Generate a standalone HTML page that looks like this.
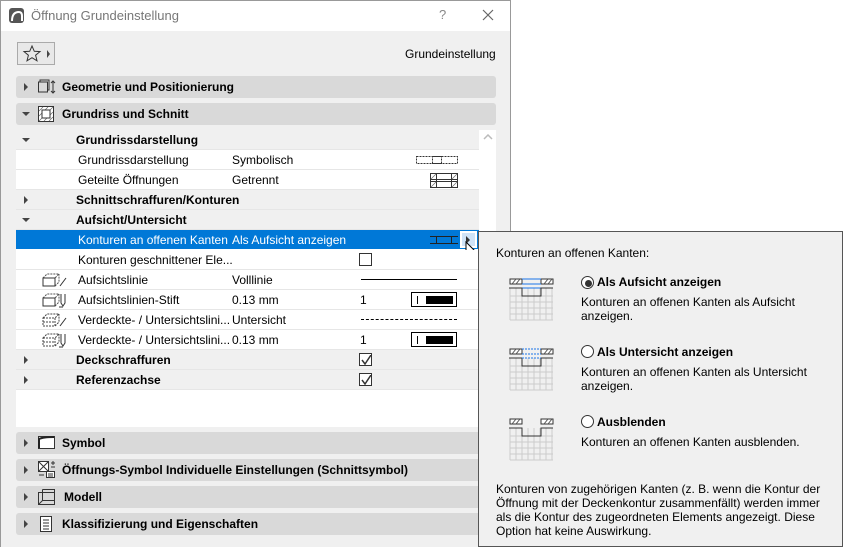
<!DOCTYPE html>
<html><head><meta charset="utf-8"><style>
*{margin:0;padding:0;box-sizing:border-box}
body{width:843px;height:547px;background:#fff;font-family:"Liberation Sans",sans-serif;font-size:12px;color:#000;position:relative;overflow:hidden}
.a{position:absolute}
.win{left:0;top:0;width:511px;height:547px;background:#f0f0f0;border-left:1px solid #999;border-right:1px solid #999;border-top:1px solid #999}
.title{left:1px;top:1px;width:509px;height:30px;background:#fff}
.hdr{left:16px;width:480px;height:22px;background:#d9d9d9;border-radius:3px;font-weight:bold}
.hdr .t{position:absolute;top:4px}
.tri{position:absolute;width:0;height:0;border-top:4px solid transparent;border-bottom:4px solid transparent;border-left:4px solid #444}
.trd{position:absolute;width:0;height:0;border-left:4px solid transparent;border-right:4px solid transparent;border-top:4px solid #444}
.row{left:16px;width:463px;height:20px;background:#fff;border-bottom:1px solid #e6e6e6}
.row.g{background:#f0f0f0;font-weight:bold}
.row span{position:absolute;top:3px}
.c1{left:62px}.c2{left:216px}
.cb{position:absolute;width:13px;height:13px;border:1px solid #333;background:#fff}
.pop{left:478px;top:231px;width:365px;height:316px;background:#f0f0f0;border:1px solid #555}
.pop div{position:absolute}
.radio{width:13px;height:13px;border:1px solid #333;border-radius:50%;background:#fff}
</style></head><body>
<div class="a win"></div>
<div class="a title"></div>
<svg class="a" style="left:9px;top:8px" width="15" height="15"><rect x="0" y="0" width="15" height="15" rx="3" fill="#555"/><path d="M3 13 Q3 4 10 4 Q13 4 13 8 L13 13" stroke="#fff" stroke-width="2" fill="none"/></svg>
<div class="a" style="left:31px;top:8px;font-size:13px;color:#777">Öffnung Grundeinstellung</div>
<div class="a" style="left:439px;top:7px;font-size:13px;color:#888">?</div>
<svg class="a" style="left:482px;top:9px" width="12" height="12"><path d="M1 1L11 11M11 1L1 11" stroke="#666" stroke-width="1.2"/></svg>
<div class="a" style="left:17px;top:42px;width:38px;height:23px;border:1px solid #aaa;background:#e8e8e8"></div>
<svg class="a" style="left:22px;top:44px" width="20" height="19"><path d="M10 2 L12.3 7.3 L18 7.6 L13.6 11.2 L15 16.8 L10 13.7 L5 16.8 L6.4 11.2 L2 7.6 L7.7 7.3Z" fill="none" stroke="#333"/></svg>
<div class="tri" style="left:47px;top:50px;border-left-width:3px"></div>
<div class="a" style="left:405px;top:47px">Grundeinstellung</div>

<div class="a hdr" style="top:76px"><div class="tri" style="left:8px;top:7px"></div>
<svg class="a" style="left:22px;top:3px" width="18" height="16"><rect x="2" y="1" width="9" height="10" fill="none" stroke="#333"/><rect x="0.5" y="3" width="9" height="10" fill="#d9d9d9" stroke="#333"/><path d="M15 2v12M13 4l2-2 2 2M13 12l2 2 2-2" stroke="#333" fill="none"/></svg>
<span class="t" style="left:46px">Geometrie und Positionierung</span></div>
<div class="a hdr" style="top:103px"><div class="trd" style="left:6px;top:9px"></div>
<svg class="a" style="left:22px;top:3px" width="16" height="16"><rect x="0.5" y="0.5" width="15" height="15" fill="#fff" stroke="#333"/><path d="M1 5l4-4M1 10l9-9M1 15l14-14M6 15l9-9M11 15l4-4" stroke="#666" stroke-width=".7"/><rect x="4" y="4" width="8" height="8" fill="#fff" stroke="#333"/></svg>
<span class="t" style="left:46px">Grundriss und Schnitt</span></div>

<div class="a" style="left:16px;top:130px;width:480px;height:297px;background:#fff"></div>
<svg class="a" style="left:483px;top:134px" width="10" height="6"><path d="M1 5l4-4 4 4" stroke="#bbb" fill="none" stroke-width="1.5"/></svg>

<div class="a row g" style="top:130px"><div class="trd" style="left:6px;top:8px"></div><span class="c1" style="left:60px">Grundrissdarstellung</span></div>
<div class="a row" style="top:150px"><span class="c1">Grundrissdarstellung</span><span class="c2">Symbolisch</span>
<svg class="a" style="left:400px;top:6px" width="42" height="8"><rect x=".5" y=".5" width="16" height="7" fill="#fff" stroke="#333" stroke-dasharray="2 1"/><rect x="25.5" y=".5" width="16" height="7" fill="#fff" stroke="#333" stroke-dasharray="2 1"/><path d="M16 .5h10M16 7.5h10" stroke="#333"/></svg></div>
<div class="a row" style="top:170px"><span class="c1">Geteilte Öffnungen</span><span class="c2">Getrennt</span>
<svg class="a" style="left:414px;top:3px" width="28" height="15"><path d="M0 .5h28M0 6.5h28M0 8.5h28M0 14.5h28M.5 0v15M6.5 0v15M21.5 0v15M27.5 0v15" stroke="#333"/><path d="M1 6l5-5M1 14l5-5M22 6l5-5M22 14l5-5" stroke="#666" stroke-width=".7"/></svg></div>
<div class="a row g" style="top:190px"><div class="tri" style="left:8px;top:6px"></div><span class="c1" style="left:60px">Schnittschraffuren/Konturen</span></div>
<div class="a row g" style="top:210px"><div class="trd" style="left:6px;top:8px"></div><span class="c1" style="left:60px">Aufsicht/Untersicht</span></div>
<div class="a row" style="top:230px;background:#0078d7;color:#fff;border:none;height:19px"><span class="c1">Konturen an offenen Kanten</span><span class="c2">Als Aufsicht anzeigen</span>
<svg class="a" style="left:414px;top:6px" width="28" height="8"><path d="M0 .5h28M0 7.5h28M6.5 0v8M21.5 0v8" stroke="#222"/></svg>
<div class="a" style="left:444px;top:1px;width:17px;height:17px;border:2px solid #fff;background:#cfe3f7"></div><div class="tri" style="left:450px;top:6px;border-left-color:#333"></div></div>
<svg class="a" style="left:465px;top:241px" width="14" height="20"><path d="M1 1v15l4-3 3 6 2-1-3-6h5z" fill="#fff" stroke="#000"/></svg>
<div class="a row" style="top:250px"><span class="c1">Konturen geschnittener Ele...</span><div class="cb" style="left:343px;top:3px"></div></div>
<div class="a row" style="top:270px"><span class="c1">Aufsichtslinie</span><span class="c2">Volllinie</span><div class="a" style="left:345px;top:9px;width:96px;border-top:1px solid #000"></div>
<svg class="a" style="left:26px;top:2px" width="26" height="16"><path d="M1 6h12v8H1zM1 6l4-4h12l-4 4M13 14l4-4V2" fill="none" stroke="#555" stroke-dasharray="2 1"/><path d="M1 6h12v8H1z" fill="none" stroke="#333"/><path d="M18 14l6-8" stroke="#333"/></svg></div>
<div class="a row" style="top:290px"><span class="c1">Aufsichtslinien-Stift</span><span class="c2">0.13 mm</span><span style="left:344px">1</span>
<div class="a" style="left:395px;top:2px;width:46px;height:15px;border:1px solid #000;background:#fff"><div class="a" style="left:5px;top:3px;width:1px;height:8px;background:#000"></div><div class="a" style="left:14px;top:3px;width:27px;height:8px;background:#000"></div></div>
<svg class="a" style="left:26px;top:2px" width="26" height="16"><path d="M1 6h12v8H1zM1 6l4-4h12l-4 4M13 14l4-4V2" fill="none" stroke="#555" stroke-dasharray="2 1"/><path d="M1 6h12v8H1z" fill="none" stroke="#333"/><path d="M19 2v9l2 3 2-3V2M17 15h4" stroke="#333" fill="none"/></svg></div>
<div class="a row" style="top:310px"><span class="c1">Verdeckte- / Untersichtslini...</span><span class="c2">Untersicht</span><div class="a" style="left:345px;top:9px;width:96px;border-top:1px dashed #000"></div>
<svg class="a" style="left:26px;top:2px" width="26" height="16"><path d="M1 6h12v8H1zM1 6l4-4h12l-4 4M13 14l4-4V2M1 10h12" fill="none" stroke="#444" stroke-dasharray="2 1"/><path d="M18 14l6-8" stroke="#333"/></svg></div>
<div class="a row" style="top:330px"><span class="c1">Verdeckte- / Untersichtslini...</span><span class="c2">0.13 mm</span><span style="left:344px">1</span>
<div class="a" style="left:395px;top:2px;width:46px;height:15px;border:1px solid #000;background:#fff"><div class="a" style="left:5px;top:3px;width:1px;height:8px;background:#000"></div><div class="a" style="left:14px;top:3px;width:27px;height:8px;background:#000"></div></div>
<svg class="a" style="left:26px;top:2px" width="26" height="16"><path d="M1 6h12v8H1zM1 6l4-4h12l-4 4M13 14l4-4V2M1 10h12" fill="none" stroke="#444" stroke-dasharray="2 1"/><path d="M19 2v9l2 3 2-3V2M17 15h4" stroke="#333" fill="none"/></svg></div>
<div class="a row g" style="top:350px"><div class="tri" style="left:8px;top:6px"></div><span class="c1" style="left:60px">Deckschraffuren</span><div class="cb" style="left:343px;top:3px"></div><svg class="a" style="left:345px;top:5px" width="11" height="10"><path d="M1 5l3 4 6-9" stroke="#333" stroke-width="1.5" fill="none"/></svg></div>
<div class="a row g" style="top:370px"><div class="tri" style="left:8px;top:6px"></div><span class="c1" style="left:60px">Referenzachse</span><div class="cb" style="left:343px;top:3px"></div><svg class="a" style="left:345px;top:5px" width="11" height="10"><path d="M1 5l3 4 6-9" stroke="#333" stroke-width="1.5" fill="none"/></svg></div>

<div class="a hdr" style="top:432px"><div class="tri" style="left:8px;top:7px"></div>
<svg class="a" style="left:22px;top:4px" width="18" height="14"><rect x=".5" y=".5" width="16" height="12" fill="#fff" stroke="#333"/><path d="M1 12V3Q5 1 16 1" fill="none" stroke="#222" stroke-width="2"/></svg>
<span class="t" style="left:46px">Symbol</span></div>
<div class="a hdr" style="top:459px"><div class="tri" style="left:8px;top:7px"></div>
<svg class="a" style="left:22px;top:2px" width="18" height="18"><rect x=".5" y=".5" width="10" height="10" fill="#fff" stroke="#333"/><path d="M1 1l9 9M10 1l-9 9" stroke="#333"/><path d="M13 2h4M15 0v4M13 6h4" stroke="#333"/><rect x="8.5" y="10.5" width="8" height="6" fill="#fff" stroke="#333"/><path d="M10 13h5M10 15h5M1 14h5" stroke="#333"/></svg>
<span class="t" style="left:46px">Öffnungs-Symbol Individuelle Einstellungen (Schnittsymbol)</span></div>
<div class="a hdr" style="top:486px"><div class="tri" style="left:8px;top:7px"></div>
<svg class="a" style="left:22px;top:3px" width="18" height="16"><path d="M.5 3.5h16v12H.5zM.5 15.5l4-4h12M4.5 11.5V.5" fill="none" stroke="#333"/><path d="M4.5 .5h12v3" fill="none" stroke="#333"/></svg>
<span class="t" style="left:48px">Modell</span></div>
<div class="a hdr" style="top:513px"><div class="tri" style="left:8px;top:7px"></div>
<svg class="a" style="left:24px;top:3px" width="12" height="16"><rect x=".5" y=".5" width="11" height="15" fill="#fff" stroke="#333"/><path d="M3 4h6M3 7h6M3 10h6M3 13h6" stroke="#333"/></svg>
<span class="t" style="left:46px">Klassifizierung und Eigenschaften</span></div>

<div class="a pop">
<div style="left:17px;top:14px">Konturen an offenen Kanten:</div>
<svg style="position:absolute;left:30px;top:44px" width="48" height="45"><g stroke="#ccc"><path d="M1 12v32M7 12v32M13 12v32M19 12v32M25 12v32M31 12v32M37 12v32M43 12v32M1 20h43M1 26h43M1 32h43M1 38h43M1 44h43"/></g><rect x="1" y="3" width="12" height="5" fill="#fff" stroke="#333"/><rect x="32" y="3" width="12" height="5" fill="#fff" stroke="#333"/><path d="M3 8l4-5M7 8l4-5M35 8l4-5M39 8l4-5" stroke="#555"/><path d="M13 3h19M13 8h19M13 12h19" stroke="#1a73e8"/><path d="M0 12h13v8h19v-8h12" stroke="#333" fill="none"/></svg>
<div class="radio" style="left:102px;top:44px"></div><div style="left:106px;top:48px;width:7px;height:7px;border-radius:50%;background:#333"></div>
<div style="left:118px;top:43px;font-weight:bold">Als Aufsicht anzeigen</div>
<div style="left:102px;top:63px;line-height:14px">Konturen an offenen Kanten als Aufsicht<br>anzeigen.</div>
<svg style="position:absolute;left:30px;top:114px" width="48" height="45"><g stroke="#ccc"><path d="M1 12v32M7 12v32M13 12v32M19 12v32M25 12v32M31 12v32M37 12v32M43 12v32M1 20h43M1 26h43M1 32h43M1 38h43M1 44h43"/></g><rect x="1" y="3" width="12" height="5" fill="#fff" stroke="#333"/><rect x="32" y="3" width="12" height="5" fill="#fff" stroke="#333"/><path d="M3 8l4-5M7 8l4-5M35 8l4-5M39 8l4-5" stroke="#555"/><path d="M13 3h19M13 8h19" stroke="#1a73e8" stroke-dasharray="2 1"/><path d="M0 12h13v8h19v-8h12" stroke="#333" fill="none"/><path d="M13 12h19" stroke="#1a73e8" stroke-dasharray="2 1"/></svg>
<div class="radio" style="left:102px;top:113px"></div>
<div style="left:118px;top:113px;font-weight:bold">Als Untersicht anzeigen</div>
<div style="left:102px;top:133px;line-height:14px">Konturen an offenen Kanten als Untersicht<br>anzeigen.</div>
<svg style="position:absolute;left:30px;top:184px" width="48" height="45"><g stroke="#ccc"><path d="M1 12v32M7 12v32M13 12v32M19 12v32M25 12v32M31 12v32M37 12v32M43 12v32M1 20h43M1 26h43M1 32h43M1 38h43M1 44h43"/></g><rect x="1" y="3" width="12" height="5" fill="#fff" stroke="#333"/><rect x="32" y="3" width="12" height="5" fill="#fff" stroke="#333"/><path d="M3 8l4-5M7 8l4-5M35 8l4-5M39 8l4-5" stroke="#555"/><path d="M0 12h13v8h19v-8h12" stroke="#333" fill="none"/></svg>
<div class="radio" style="left:102px;top:183px"></div>
<div style="left:118px;top:183px;font-weight:bold">Ausblenden</div>
<div style="left:102px;top:203px">Konturen an offenen Kanten ausblenden.</div>
<div style="left:17px;top:250px;line-height:14px">Konturen von zugehörigen Kanten (z. B. wenn die Kontur der<br>Öffnung mit der Deckenkontur zusammenfällt) werden immer<br>als die Kontur des zugeordneten Elements angezeigt. Diese<br>Option hat keine Auswirkung.</div>
</div>
</body></html>
